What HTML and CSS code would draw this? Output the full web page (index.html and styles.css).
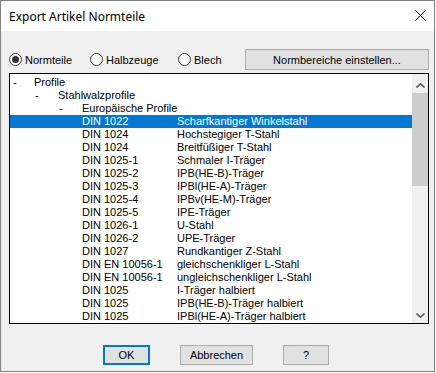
FILE: index.html
```html
<!DOCTYPE html>
<html lang="de">
<head>
    <meta charset="UTF-8">
    <title>Export Artikel Normteile</title>
    <link rel="stylesheet" href="styles.css">
</head>
<body>
    <div class="window">
        <div class="titlebar">
            <span class="title">Export Artikel Normteile</span>
            <svg class="close" width="11" height="11" viewBox="0 0 11 11">
                <path d="M0.5 0.5 L10.5 10.5 M10.5 0.5 L0.5 10.5" stroke="#000" stroke-width="1" fill="none"/>
            </svg>
        </div>

        <div class="content">
            <div class="options">
                <label class="opt opt-norm"><input type="radio" name="art" checked><span>Normteile</span></label>
                <label class="opt opt-halb"><input type="radio" name="art"><span>Halbzeuge</span></label>
                <label class="opt opt-blech"><input type="radio" name="art"><span>Blech</span></label>
                <button class="btn btn-range">Normbereiche einstellen...</button>
            </div>

            <div class="tree">
                <div class="rows">
                    <div class="row lvl0"><span class="dash">-</span>Profile</div>
                    <div class="row lvl1"><span class="dash">-</span>Stahlwalzprofile</div>
                    <div class="row lvl2"><span class="dash">-</span>Europäische Profile</div>
                    <div class="row leaf selected"><span class="code">DIN 1022</span>Scharfkantiger Winkelstahl</div>
                    <div class="row leaf"><span class="code">DIN 1024</span>Hochstegiger T-Stahl</div>
                    <div class="row leaf"><span class="code">DIN 1024</span>Breitfüßiger T-Stahl</div>
                    <div class="row leaf"><span class="code">DIN 1025-1</span>Schmaler I-Träger</div>
                    <div class="row leaf"><span class="code">DIN 1025-2</span>IPB(HE-B)-Träger</div>
                    <div class="row leaf"><span class="code">DIN 1025-3</span>IPBl(HE-A)-Träger</div>
                    <div class="row leaf"><span class="code">DIN 1025-4</span>IPBv(HE-M)-Träger</div>
                    <div class="row leaf"><span class="code">DIN 1025-5</span>IPE-Träger</div>
                    <div class="row leaf"><span class="code">DIN 1026-1</span>U-Stahl</div>
                    <div class="row leaf"><span class="code">DIN 1026-2</span>UPE-Träger</div>
                    <div class="row leaf"><span class="code">DIN 1027</span>Rundkantiger Z-Stahl</div>
                    <div class="row leaf"><span class="code">DIN EN 10056-1</span>gleichschenkliger L-Stahl</div>
                    <div class="row leaf"><span class="code">DIN EN 10056-1</span>ungleichschenkliger L-Stahl</div>
                    <div class="row leaf"><span class="code">DIN 1025</span>I-Träger halbiert</div>
                    <div class="row leaf"><span class="code">DIN 1025</span>IPB(HE-B)-Träger halbiert</div>
                    <div class="row leaf"><span class="code">DIN 1025</span>IPBl(HE-A)-Träger halbiert</div>
                </div>
                <div class="scrollbar">
                    <div class="sb-btn sb-up">
                        <svg width="9" height="5" viewBox="0 0 9 5"><path d="M0.5 4.5 L4.5 0.8 L8.5 4.5" stroke="#606060" stroke-width="1.6" fill="none"/></svg>
                    </div>
                    <div class="sb-thumb"></div>
                    <div class="sb-track"></div>
                    <div class="sb-btn sb-down">
                        <svg width="9" height="5" viewBox="0 0 9 5"><path d="M0.5 0.5 L4.5 4.2 L8.5 0.5" stroke="#606060" stroke-width="1.6" fill="none"/></svg>
                    </div>
                </div>
            </div>

            <div class="actions">
                <button class="btn btn-ok">OK</button>
                <button class="btn btn-cancel">Abbrechen</button>
                <button class="btn btn-help">?</button>
            </div>
        </div>
    </div>
</body>
</html>
```

FILE: styles.css
```css
body {
    margin: 0;
    background-color: #fff;
    font-family: "Liberation Sans", Arial, sans-serif;
    font-size: 11px;
    color: #000;
}

.window {
    width: 435px;
    height: 372px;
    box-sizing: border-box;
    border: 1px solid #808080;
    background-color: #f0f0f0;
    display: flex;
    flex-direction: column;
}

.titlebar {
    height: 30px;
    background-color: #fff;
    display: flex;
    align-items: center;
    padding: 0 8px 0 8px;
}

.title {
    font-family: "Noto Sans", sans-serif;
    font-size: 12px;
    flex: 1;
}

.close {
    margin-top: -1px;
}

.content {
    padding: 18px 5px 0 8px;
}

/* Radio-Zeile mit Knopf */
.options {
    display: flex;
    align-items: center;
    height: 21px;
}

.opt {
    display: flex;
    align-items: center;
    gap: 3px;
}

.opt-norm { width: 81px; }
.opt-halb { width: 88px; }
.opt-blech { flex: 1; }

.opt input {
    appearance: none;
    margin: 0;
    width: 13px;
    height: 13px;
    border: 1px solid #333;
    border-radius: 50%;
    background-color: #fff;
    box-sizing: border-box;
    display: flex;
    align-items: center;
    justify-content: center;
}

.opt input:checked::after {
    content: "";
    width: 7px;
    height: 7px;
    border-radius: 50%;
    background-color: #333;
}

.btn {
    font-family: "Liberation Sans", Arial, sans-serif;
    font-size: 11px;
    color: #000;
    background-color: #e1e1e1;
    border: 1px solid #adadad;
    padding: 0;
    box-sizing: border-box;
}

.btn-range {
    width: 184px;
    height: 21px;
}

/* Baumliste */
.tree {
    margin-top: 3px;
    height: 251px;
    width: 420px;
    box-sizing: border-box;
    border: 1px solid #000;
    background-color: #fff;
    display: flex;
    overflow: hidden;
}

.rows {
    flex: 1;
    padding-top: 2px;
}

.row {
    height: 13px;
    line-height: 13px;
    white-space: nowrap;
    display: flex;
}

.row.selected {
    background-color: #0078d7;
    color: #fff;
}

.lvl0 { padding-left: 3px; }
.lvl1 { padding-left: 25px; }
.lvl2 { padding-left: 49px; }
.lvl0 .dash { width: 21px; }
.lvl1 .dash, .lvl2 .dash { width: 23px; }

.leaf { padding-left: 72px; }

.code {
    width: 95px;
}

.scrollbar {
    width: 16px;
    background-color: #f0f0f0;
    display: flex;
    flex-direction: column;
}

.sb-btn {
    display: flex;
    align-items: center;
    justify-content: center;
}

.sb-up { height: 19px; padding-top: 3px; box-sizing: border-box; }
.sb-down { height: 15px; }

.sb-thumb {
    height: 93px;
    background-color: #cdcdcd;
}

.sb-track {
    flex: 1;
}

/* Knöpfe unten */
.actions {
    margin-top: 21px;
    display: flex;
    justify-content: center;
    gap: 30px;
    padding-right: 6px;
}

.actions .btn {
    height: 20px;
}

.btn-ok {
    width: 47px;
    border: 2px solid #0078d7;
}

.btn-cancel { width: 73px; }
.btn-help { width: 46px; }
```
